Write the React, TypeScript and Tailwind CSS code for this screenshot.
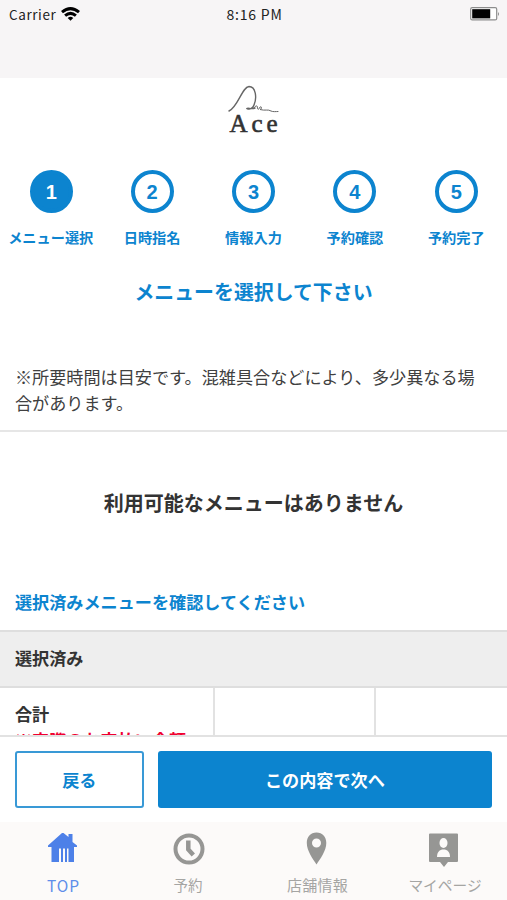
import React from 'react';
import { clsx } from 'clsx';

const steps = ['メニュー選択', '日時指名', '情報入力', '予約確認', '予約完了'];

function StatusBar() {
  return (
    <header className="h-[78px] bg-[#f7f5f6]">
      <div className="grid h-[27px] grid-cols-3 items-center pr-[7px] pl-[9px] text-[14px] leading-[26px] tracking-[0.8px] text-[#222]">
        <div className="flex items-center gap-[5px]">
          <span className="text-[13.5px] tracking-[0.6px]">Carrier</span>
          <svg width="19" height="14" viewBox="0 0 19 14" fill="none" stroke="#000" strokeWidth="3">
            <path d="M1 5.2Q9.5-1.9 18 5.2" />
            <path d="M4.1 8.6Q9.5 4.1 14.9 8.6" />
            <path d="M9.5 13.8 6.7 10.9Q9.5 8.8 12.3 10.9Z" fill="#000" stroke="none" />
          </svg>
        </div>
        <span className="text-center">8:16 PM</span>
        <svg className="justify-self-end" width="30" height="14" viewBox="0 0 30 14">
          <rect x="0.7" y="0.7" width="26" height="12.2" rx="1.5" fill="#fff" stroke="#8c8c8c" strokeWidth="1.2" />
          <rect x="2.2" y="2.2" width="18" height="9.2" fill="#000" />
          <path d="M28 5v4q2-2 0-4Z" fill="#8c8c8c" />
        </svg>
      </div>
    </header>
  );
}

function Logo() {
  return (
    <div className="flex h-[92px] flex-col items-center pt-[7px]">
      <svg width="52" height="28" viewBox="0 0 52 28" fill="none" stroke="#666" strokeLinecap="round">
        <path d="M1 26C10 22 14 2 21 1.500C28 1.500 29 13 26 20C25 23 22 25 19 23.500C20 22 23 25 27 23" strokeWidth="1.400" />
        <path d="M26 23C27 21 29 20 29.500 22C29 25 31 25 32 22C34 21 34 24 32 24.500C37 26 40 24 43 26C45 27 48 26.500 50 26.500" strokeWidth="1" />
      </svg>
      <p className="mt-[-2px] pl-[4px] font-['Liberation_Serif',serif] text-[25px] leading-[26px] tracking-[4px] text-[#333] [-webkit-text-stroke:0.6px_#333]">
        Ace
      </p>
    </div>
  );
}

function Steps() {
  return (
    <ol className="grid h-[82px] grid-cols-5">
      {steps.map((label, i) => (
        <li key={label} className="flex flex-col items-center text-[#0c84cf]">
          <span
            className={clsx(
              "flex size-[43px] items-center justify-center rounded-full border-4 border-[#0c84cf] font-['Liberation_Sans',sans-serif] text-[20px] font-bold",
              i === 0 && 'ml-px bg-[#0c84cf] text-white'
            )}
          >
            {i + 1}
          </span>
          <span className="mt-[14px] text-[14.2px] leading-5 font-bold whitespace-nowrap">{label}</span>
        </li>
      ))}
    </ol>
  );
}

const tabs = [
  {
    label: 'TOP',
    icon: (
      <path d="M3 16V14.500L17 2h1.500l5 4V3h4v8l4.500 3.500V16h-3v15h-5.500V17.500h-1.500V31h-2V17.500h-2V31h-2V17.500H14V31H6.500V16Z" fill="#4d80e8" />
    ),
  },
  {
    label: '予約',
    icon: (
      <g fill="none" stroke="#969694">
        <circle cx="18" cy="18" r="13.500" strokeWidth="4" />
        <path d="M17.300 9.500v9l5 5.500" strokeWidth="4.500" />
      </g>
    ),
  },
  {
    label: '店舗情報',
    icon: (
      <path
        d="M16.500 1.500C10.500 1.500 6.800 6 6.800 12C6.800 20 13 28 16.500 33.500C20 28 26.300 20 26.300 12C26.300 6 22.500 1.500 16.500 1.500ZM16.500 7.500a4.500 4.500 0 1 1 0 9a4.500 4.500 0 1 1 0-9Z"
        fill="#969694"
      />
    ),
  },
  {
    label: 'マイページ',
    icon: (
      <>
        <path d="M3 2.500h27q1 0 1 1V30q0 1-1 1h-9L17 36 13 31H3q-1 0-1-1V3.500q0-1 1-1Z" fill="#969694" />
        <ellipse cx="16.500" cy="12" rx="4" ry="5" fill="#fcfaf9" />
        <path d="M10 26c0-5 2.500-7.500 6.500-7.500s6.500 2.500 6.500 7.500Z" fill="#fcfaf9" />
      </>
    ),
  },
];

function TabBar() {
  return (
    <nav className="grid h-[78px] grid-cols-[124px_128px_129px_126px] bg-[#fcfaf9]">
      {tabs.map((tab, i) => (
        <a
          key={tab.label}
          className={clsx(
            'flex flex-col items-center pt-[9px] text-[15px] whitespace-nowrap',
            i === 0 ? 'text-[#5e8eea]' : 'text-[#a5a5a3]'
          )}
        >
          <svg width="34" height="37" viewBox="0 0 34 37">
            {tab.icon}
          </svg>
          <span
            className={clsx(
              'mt-[7px] leading-5',
              i === 0 && 'pl-[3px] text-[15.5px] tracking-[1px]',
              i === 1 && 'text-[14.5px]',
              i === 2 && 'pl-[2px] tracking-[0.3px]',
              i === 3 && 'pl-[2px] text-[14.7px]'
            )}
          >
            {tab.label}
          </span>
        </a>
      ))}
    </nav>
  );
}

export default function App() {
  return (
    <div className="flex h-[900px] w-[507px] flex-col overflow-hidden bg-white font-['Noto_Sans_CJK_JP',sans-serif] text-[#333]">
      <StatusBar />
      <main className="h-[657px] shrink-0 overflow-hidden">
        <Logo />
        <Steps />
        <h1 className="h-[112px] pt-[25px] text-center text-[19.9px] leading-[30px] font-bold text-[#0c84cf]">
          メニューを選択して下さい
        </h1>
        <p className="h-[68px] border-b-2 border-[#e6e6e6] pr-[20px] pl-[15px] text-[17.14px] leading-[25.7px] text-[#404040]">
          ※所要時間は目安です。混雑具合などにより、多少異なる場合があります。
        </p>
        <h2 className="h-[144px] pt-[56px] text-center text-[20px] leading-[30px] font-bold">
          利用可能なメニューはありません
        </h2>
        <h3 className="h-[54px] px-[15px] pt-[13px] text-[17.14px] leading-[26px] font-bold text-[#0c84cf]">
          選択済みメニューを確認してください
        </h3>
        <div className="h-[58px] border-y-2 border-[#dedede] bg-[#eee] px-[15px] text-[17.14px] leading-[52px] font-bold">
          選択済み
        </div>
        <div className="grid h-[90px] grid-cols-[215px_161px_1fr] divide-x-2 divide-[#e2e2e2] text-[17.14px] leading-[25.7px] font-bold">
          <div className="pt-[13px] pl-[15px]">
            <p>合計</p>
            <p className="whitespace-nowrap text-[#f00030]">※実際のお支払い金額</p>
          </div>
          <div />
          <div />
        </div>
      </main>
      <div className="flex h-[87px] shrink-0 gap-[14px] border-t-2 border-[#e2e2e2] px-[15px] pt-[14px] text-[17.14px] font-bold">
        <button className="h-[57px] w-[129px] rounded-[3px] border-2 border-[#3999d6] text-[#0c84cf]">戻る</button>
        <button className="h-[57px] w-[335px] rounded-[3px] bg-[#0c84cf] text-white">この内容で次へ</button>
      </div>
      <TabBar />
    </div>
  );
}
